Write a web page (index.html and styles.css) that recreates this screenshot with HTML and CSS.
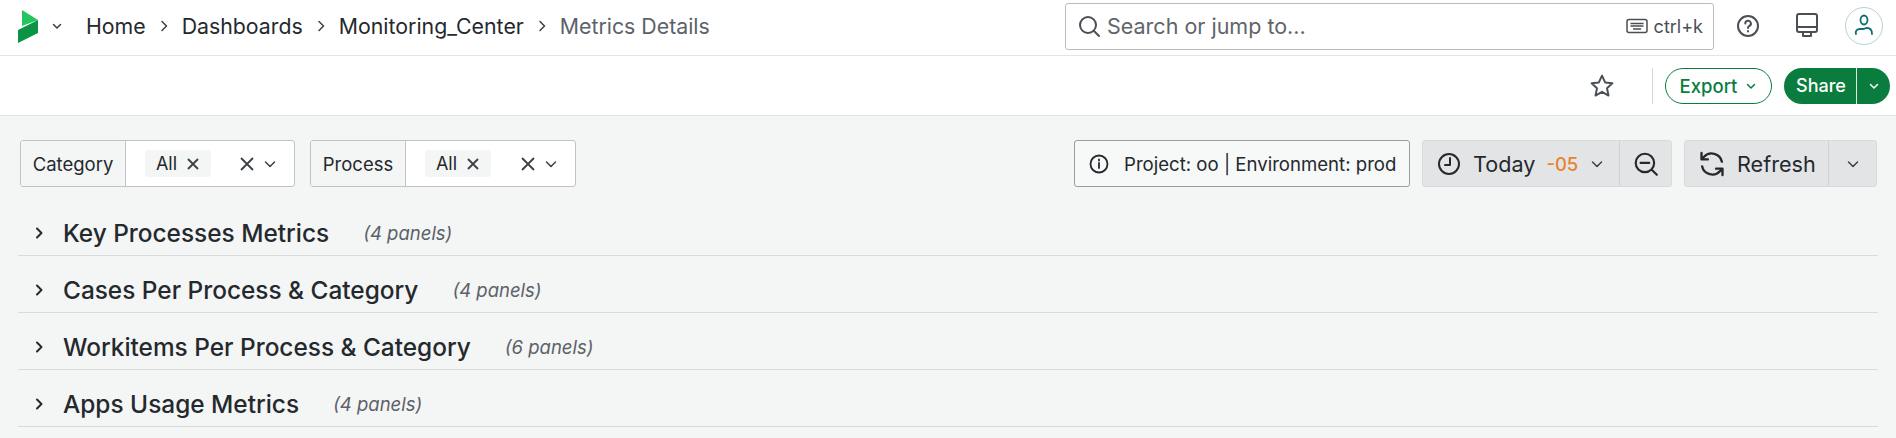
FILE: index.html
```html
<!DOCTYPE html>
<html lang="en">
<head>
    <meta charset="UTF-8">
    <title>Metrics Details</title>
    <link rel="stylesheet" href="styles.css">
</head>
<body>

    <!-- Top nav -->
    <header class="topnav">
        <svg class="logo" width="22" height="33" viewBox="0 0 22 33">
            <path d="M4 0 L20 10 L4 16 Z" fill="#22c55e"/>
            <path d="M0 20 L20 10 L20 23 L0 33 Z" fill="#0b9444"/>
        </svg>
        <svg class="chev logo-chev" width="12" height="12" viewBox="0 0 12 12"><path d="M2.500 4.500 6 8l3.500-3.500"/></svg>
        <nav class="crumbs">
            <a>Home</a>
            <svg class="chev" width="14" height="14" viewBox="0 0 14 14"><path d="M5 2.500 9.500 7 5 11.500"/></svg>
            <a>Dashboards</a>
            <svg class="chev" width="14" height="14" viewBox="0 0 14 14"><path d="M5 2.500 9.500 7 5 11.500"/></svg>
            <a>Monitoring_Center</a>
            <svg class="chev" width="14" height="14" viewBox="0 0 14 14"><path d="M5 2.500 9.500 7 5 11.500"/></svg>
            <span class="current">Metrics Details</span>
        </nav>

        <div class="search">
            <svg class="icon" width="24" height="24" viewBox="0 0 24 24"><circle cx="11" cy="11" r="8"/><path d="M17 17l5 5"/></svg>
            <span class="search-text">Search or jump to...</span>
            <svg class="kbd" width="22" height="16" viewBox="0 0 22 16"><rect x="1" y="1.500" width="20" height="13" rx="2"/><path d="M4.500 5.500h13M4.500 8h13M7 11h8"/></svg>
            <span class="search-key">ctrl+k</span>
        </div>

        <svg class="icon nav-help" width="24" height="24" viewBox="0 0 24 24"><circle cx="12" cy="12" r="10"/><path d="M9.300 9.500a2.800 2.800 0 1 1 4.200 2.400c-1 .6-1.500 1.100-1.500 2.100"/><path d="M12 17v.5"/></svg>
        <svg class="icon nav-monitor" width="24" height="28" viewBox="0 0 24 28"><rect x="2" y="2" width="20" height="18" rx="2"/><path d="M2 15h20M8 20v4h8v-4"/></svg>
        <div class="avatar">
            <svg width="22" height="24" viewBox="0 0 22 24"><ellipse cx="11" cy="6" rx="3.500" ry="4.500" fill="none" stroke="#0f6f74" stroke-width="1.800"/><path d="M3 20c-1-3 1-5 4-5h3c2 0 2-1 4-1 3 0 5 2 5 6" fill="none" stroke="#0f6f74" stroke-width="1.800" stroke-linecap="round"/></svg>
        </div>
    </header>

    <!-- Toolbar -->
    <div class="toolbar">
        <svg class="icon star" width="26" height="26" viewBox="0 0 24 24"><path d="M12 2.500l2.900 6.200 6.700.8-5 4.600 1.400 6.700L12 17.400l-6 3.400 1.400-6.700-5-4.600 6.700-.8z"/></svg>
        <span class="toolbar-sep"></span>
        <button class="btn-export">Export
            <svg class="chev" width="12" height="12" viewBox="0 0 12 12"><path d="M2.500 4.500 6 8l3.500-3.500"/></svg>
        </button>
        <div class="btn-share">
            <span class="share-main">Share</span>
            <span class="share-more"><svg class="chev" width="12" height="12" viewBox="0 0 12 12"><path d="M2.500 4.500 6 8l3.500-3.500"/></svg></span>
        </div>
    </div>

    <main class="content">
        <!-- Filters -->
        <div class="filters">
            <div class="filter filter-category">
                <span class="filter-label">Category</span>
                <div class="filter-value">
                    <span class="chip">All <svg class="x" width="14" height="14" viewBox="0 0 14 14"><path d="M2 2l10 10M12 2 2 12"/></svg></span>
                    <svg class="x x-clear" width="16" height="16" viewBox="0 0 16 16"><path d="M2 2l12 12M14 2 2 14"/></svg>
                    <svg class="chev" width="14" height="14" viewBox="0 0 14 14"><path d="M2.500 5 7 9.500 11.500 5"/></svg>
                </div>
            </div>
            <div class="filter filter-process">
                <span class="filter-label">Process</span>
                <div class="filter-value">
                    <span class="chip">All <svg class="x" width="14" height="14" viewBox="0 0 14 14"><path d="M2 2l10 10M12 2 2 12"/></svg></span>
                    <svg class="x x-clear" width="16" height="16" viewBox="0 0 16 16"><path d="M2 2l12 12M14 2 2 14"/></svg>
                    <svg class="chev" width="14" height="14" viewBox="0 0 14 14"><path d="M2.500 5 7 9.500 11.500 5"/></svg>
                </div>
            </div>

            <div class="info-box">
                <svg class="icon" width="20" height="20" viewBox="0 0 20 20"><circle cx="10" cy="10" r="8.500"/><path d="M10 9v5M10 5.500v1"/></svg>
                <span>Project: oo | Environment: prod</span>
            </div>

            <div class="btn-group time-group">
                <div class="group-main">
                    <svg class="icon" width="24" height="24" viewBox="0 0 24 24"><circle cx="12" cy="12" r="10"/><path d="M13 6v7H8"/></svg>
                    <span class="group-text">Today</span>
                    <span class="tz">-05</span>
                    <svg class="chev" width="14" height="14" viewBox="0 0 14 14"><path d="M2.500 5 7 9.500 11.500 5"/></svg>
                </div>
                <div class="group-side">
                    <svg class="icon" width="26" height="26" viewBox="0 0 24 24"><circle cx="11" cy="11" r="8.500"/><path d="M7 11h8M17.500 17.500 22 22"/></svg>
                </div>
            </div>

            <div class="btn-group refresh-group">
                <div class="group-main">
                    <svg class="icon" width="28" height="28" viewBox="0 0 24 24"><path d="M20.500 10A9 9 0 0 0 5 6L3 8M3 2.500V8h5.500"/><path d="M3.500 14A9 9 0 0 0 19 18l2-2M21 21.500V16h-5.500"/></svg>
                    <span class="group-text">Refresh</span>
                </div>
                <div class="group-side">
                    <svg class="chev" width="14" height="14" viewBox="0 0 14 14"><path d="M2.500 5 7 9.500 11.500 5"/></svg>
                </div>
            </div>
        </div>

        <!-- Rows -->
        <section class="row">
            <svg class="chev" width="14" height="14" viewBox="0 0 14 14"><path d="M5 2.500 9.500 7 5 11.500"/></svg>
            <h3>Key Processes Metrics</h3>
            <span class="panels">(4 panels)</span>
        </section>
        <section class="row">
            <svg class="chev" width="14" height="14" viewBox="0 0 14 14"><path d="M5 2.500 9.500 7 5 11.500"/></svg>
            <h3>Cases Per Process &amp; Category</h3>
            <span class="panels">(4 panels)</span>
        </section>
        <section class="row">
            <svg class="chev" width="14" height="14" viewBox="0 0 14 14"><path d="M5 2.500 9.500 7 5 11.500"/></svg>
            <h3>Workitems Per Process &amp; Category</h3>
            <span class="panels">(6 panels)</span>
        </section>
        <section class="row">
            <svg class="chev" width="14" height="14" viewBox="0 0 14 14"><path d="M5 2.500 9.500 7 5 11.500"/></svg>
            <h3>Apps Usage Metrics</h3>
            <span class="panels">(4 panels)</span>
        </section>
    </main>

</body>
</html>
```

FILE: styles.css
```css
/* General */
body {
    margin: 0;
    height: 438px;
    overflow: hidden;
    font-family: 'Inter', 'Liberation Sans', sans-serif;
    background-color: #f4f5f5;
    color: #24292e;
}

svg {
    flex: none;
    display: block;
}

.icon {
    fill: none;
    stroke: #4a4f55;
    stroke-width: 2;
    stroke-linecap: round;
    stroke-linejoin: round;
}

.chev {
    fill: none;
    stroke: #3b4046;
    stroke-width: 1.5;
    stroke-linecap: round;
    stroke-linejoin: round;
}

.x {
    fill: none;
    stroke: #3b4046;
    stroke-width: 1.8;
}

/* Top nav */
.topnav {
    height: 56px;
    box-sizing: border-box;
    background-color: #fff;
    border-bottom: 1px solid #e2e4e6;
    display: flex;
    align-items: center;
    padding: 0 0 3px 18px;
}

.logo-chev {
    margin-left: 11px;
}

.crumbs {
    display: flex;
    align-items: center;
    gap: 11px;
    margin-left: 23px;
    font-size: 21.3px;
    color: #24292e;
    width: 979px;
}

.crumbs .current {
    color: #5b6269;
}

.search {
    width: 649px;
    height: 47px;
    box-sizing: border-box;
    background-color: #fff;
    border: 1px solid #b9bcc0;
    border-radius: 3px;
    display: flex;
    align-items: center;
    padding: 0 10px 0 11px;
}

.search-text {
    flex: 1;
    margin-left: 6px;
    font-size: 21.5px;
    color: #5f656b;
}

.kbd {
    fill: none;
    stroke: #4a4f55;
    stroke-width: 1.5;
    margin-right: 6px;
}

.search-key {
    font-size: 18px;
    color: #4a4f55;
}

.nav-help {
    margin-left: 22px;
}

.nav-monitor {
    margin-left: 35px;
}

.avatar {
    width: 36px;
    height: 36px;
    margin-left: 26px;
    border: 1px solid #b5d3d6;
    border-radius: 50%;
    display: flex;
    align-items: center;
    justify-content: center;
}

/* Toolbar */
.toolbar {
    height: 59px;
    background-color: #fff;
    border-bottom: 1px solid #e2e4e6;
    display: flex;
    align-items: center;
    justify-content: flex-end;
    padding-right: 6px;
}

.star {
    stroke-width: 1.8;
}

.toolbar-sep {
    width: 1px;
    height: 36px;
    background-color: #d5d7da;
    margin: 0 12px 0 37px;
}

.btn-export {
    width: 107px;
    height: 36px;
    box-sizing: border-box;
    background-color: #fff;
    border: 1px solid #0a7c3e;
    border-radius: 18px;
    color: #0a7c3e;
    font-family: inherit;
    font-size: 18.5px;
    font-weight: 500;
    display: flex;
    align-items: center;
    justify-content: center;
    gap: 8px;
    padding: 0;
    margin-right: 12px;
}

.btn-export .chev {
    stroke: #0a7c3e;
}

.btn-share {
    width: 106px;
    height: 36px;
    display: flex;
    background-color: #0a7c3e;
    border-radius: 18px;
    color: #fff;
    font-size: 18px;
    font-weight: 500;
}

.share-main {
    width: 73px;
    display: flex;
    align-items: center;
    justify-content: center;
    padding-left: 2px;
    box-sizing: border-box;
    border-right: 1px solid #dfe7e2;
}

.share-more {
    flex: 1;
    display: flex;
    align-items: center;
    justify-content: center;
}

.share-more .chev {
    stroke: #fff;
}

/* Filters */
.content {
    padding: 24px 18px 0;
}

.filters {
    display: flex;
    height: 47px;
    margin-bottom: 12px;
    padding: 0 1px 0 2px;
}

.filter {
    display: flex;
    box-sizing: border-box;
    border: 1px solid #c0c3c6;
    border-radius: 3px;
    background-color: #fff;
    overflow: hidden;
}

.filter-category {
    width: 275px;
}

.filter-process {
    width: 266px;
    margin-left: 15px;
}

.filter-label {
    display: flex;
    align-items: center;
    justify-content: center;
    box-sizing: border-box;
    background-color: #f4f5f5;
    border-right: 1px solid #c0c3c6;
    font-size: 18.5px;
}

.filter-category .filter-label {
    width: 105px;
}

.filter-process .filter-label {
    width: 95px;
}

.filter-value {
    flex: 1;
    display: flex;
    align-items: center;
    padding: 0 17px 0 19px;
}

.chip {
    width: 66px;
    height: 27px;
    background-color: #f4f5f5;
    border-radius: 3px;
    display: flex;
    align-items: center;
    justify-content: center;
    gap: 9px;
    font-size: 18px;
}

.x-clear {
    margin-left: auto;
    margin-right: 8px;
}

.info-box {
    width: 336px;
    margin-left: auto;
    box-sizing: border-box;
    border: 1px solid #9a9da1;
    border-radius: 3px;
    background-color: #f7f8f8;
    display: flex;
    align-items: center;
    gap: 15px;
    padding-left: 14px;
    font-size: 18.6px;
    white-space: nowrap;
}

.info-box .icon {
    stroke: #24292e;
    stroke-width: 1.8;
}

.btn-group {
    display: flex;
    box-sizing: border-box;
    background-color: #e3e4e6;
    border: 1px solid #d8dadc;
    border-radius: 3px;
}

.time-group {
    width: 250px;
    margin-left: 12px;
}

.refresh-group {
    width: 193px;
    margin-left: 12px;
}

.group-main {
    display: flex;
    align-items: center;
    border-right: 1px solid #d0d2d5;
}

.time-group .group-main {
    width: 197px;
    padding-left: 14px;
    gap: 12px;
    box-sizing: border-box;
}

.refresh-group .group-main {
    width: 144px;
    padding-left: 13px;
    gap: 11px;
    box-sizing: border-box;
}

.group-main .icon,
.group-side .icon {
    stroke: #24292e;
}

.group-text {
    font-size: 21.6px;
}

.tz {
    font-size: 18.5px;
    font-weight: 500;
    color: #e8832d;
    margin-left: -1px;
}

.group-side {
    flex: 1;
    display: flex;
    align-items: center;
    justify-content: center;
}

/* Rows */
.row {
    height: 57px;
    box-sizing: border-box;
    border-bottom: 1px solid #d8dadc;
    display: flex;
    align-items: center;
    padding: 11px 0 0 14px;
}

.row .chev {
    stroke: #24292e;
    stroke-width: 2;
}

.row h3 {
    margin: 0 0 0 17px;
    font-size: 24.4px;
    font-weight: 500;
}

.panels {
    margin-left: 34px;
    font-size: 18.5px;
    font-style: italic;
    color: #5b6269;
}
```
